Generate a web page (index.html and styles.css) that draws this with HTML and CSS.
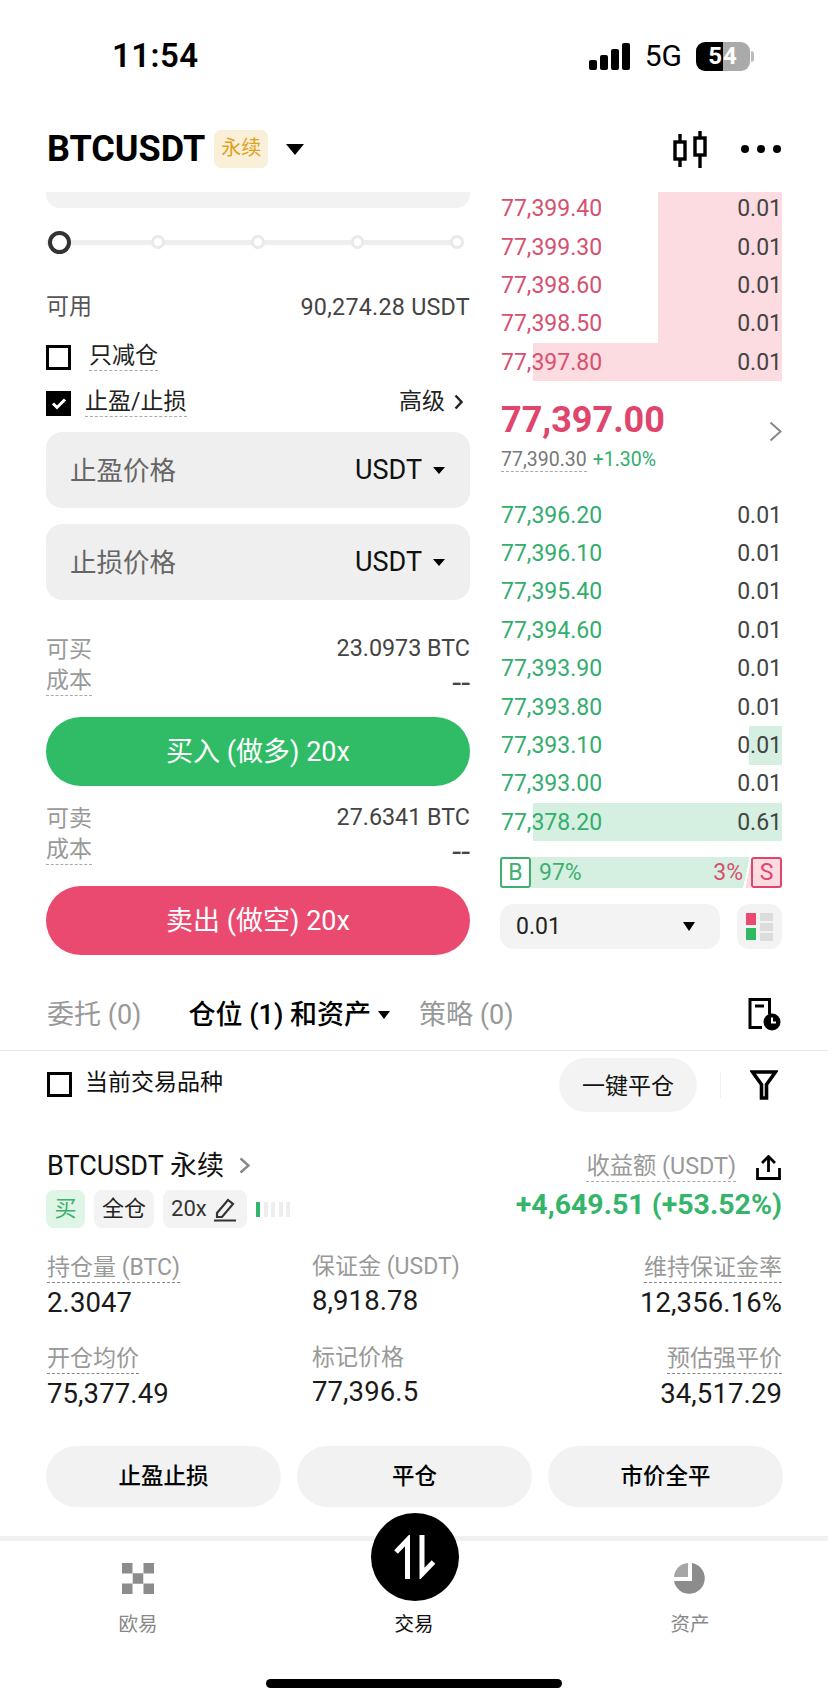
FILE: index.html
```html
<!DOCTYPE html>
<html lang="zh">
<head>
<meta charset="utf-8">
<title>BTCUSDT</title>
<link rel="stylesheet" href="styles.css">
</head>
<body>
<div class="page">
  <div class="status">
    <span class="time">11:54</span>
    <div class="status-right">
      <svg class="signal" width="42" height="27" viewBox="0 0 42 27"><rect x="0" y="17" width="8" height="10" rx="2"/><rect x="11" y="12" width="8" height="15" rx="2"/><rect x="22" y="6" width="8" height="21" rx="2"/><rect x="33" y="0" width="8" height="27" rx="2"/></svg>
      <span class="net">5G</span>
      <div class="battery"><span class="bat-a">5</span><span class="bat-b">4</span><i class="bat-tip"></i></div>
    </div>
  </div>

  <header class="head">
    <div class="head-left">
      <span class="symbol">BTCUSDT</span>
      <span class="perp">永续</span>
      <i class="tri tri-lg"></i>
    </div>
    <div class="head-right">
      <svg width="36" height="37" viewBox="0 0 36 37" fill="none" stroke="#000" stroke-width="3.4"><path d="M7 3v8M7 28v8M27 0v7M27 24v13"/><rect x="2" y="11" width="10" height="17"/><rect x="22" y="7" width="10" height="17"/></svg>
      <svg width="40" height="8" viewBox="0 0 40 8"><circle cx="4" cy="4" r="4"/><circle cx="20" cy="4" r="4"/><circle cx="36" cy="4" r="4"/></svg>
    </div>
  </header>

  <main class="trade">
    <section class="form">
      <div class="stub"></div>
      <div class="slider">
        <i class="knob"></i><i class="stop stop-first"></i><i class="stop"></i><i class="stop"></i><i class="stop"></i>
      </div>
      <div class="kv kv-avail"><span class="k-dark">可用</span><span class="avail">90,274.28 USDT</span></div>
      <label class="check-row reduce"><i class="box"></i><span class="dash check-text">只减仓</span></label>
      <div class="check-row tpsl">
        <i class="box box-on"><svg width="16" height="13" viewBox="0 0 16 13" fill="none" stroke="#fff" stroke-width="3"><path d="M2 6.5l4 4 8-8"/></svg></i>
        <span class="dash check-text">止盈/止损</span>
        <span class="adv">高级<svg width="9" height="16" viewBox="0 0 9 16" fill="none" stroke="#222" stroke-width="2.4"><path d="M1.5 1.5L7.5 8l-6 6.5"/></svg></span>
      </div>
      <div class="field"><span class="ph">止盈价格</span><span class="unit">USDT<i class="tri tri-sm"></i></span></div>
      <div class="field field-2"><span class="ph">止损价格</span><span class="unit">USDT<i class="tri tri-sm"></i></span></div>
      <div class="kv kv-first"><span class="k k-top">可买</span><span>23.0973 BTC</span></div>
      <div class="kv"><span class="k dash">成本</span><span class="none">--</span></div>
      <button class="cta buy">买入 (做多) 20x</button>
      <div class="kv kv-second"><span class="k k-top">可卖</span><span>27.6341 BTC</span></div>
      <div class="kv"><span class="k dash">成本</span><span class="none">--</span></div>
      <button class="cta sell">卖出 (做空) 20x</button>
    </section>

    <section class="book">
      <div class="asks">
        <div class="row ask"><i class="depth d-ask" style="width:124px"></i><span>77,399.40</span><b>0.01</b></div>
        <div class="row ask"><i class="depth d-ask" style="width:124px"></i><span>77,399.30</span><b>0.01</b></div>
        <div class="row ask"><i class="depth d-ask" style="width:124px"></i><span>77,398.60</span><b>0.01</b></div>
        <div class="row ask"><i class="depth d-ask" style="width:124px"></i><span>77,398.50</span><b>0.01</b></div>
        <div class="row ask"><i class="depth d-ask" style="width:249px"></i><span>77,397.80</span><b>0.01</b></div>
      </div>
      <div class="mid">
        <div>
          <div class="last">77,397.00</div>
          <div class="sub"><span class="dash mark">77,390.30</span><span class="chg">+1.30%</span></div>
        </div>
        <svg width="13" height="21" viewBox="0 0 13 21" fill="none" stroke="#888" stroke-width="2"><path d="M1.5 1.5l10 9-10 9"/></svg>
      </div>
      <div class="bids">
        <div class="row bid"><span>77,396.20</span><b>0.01</b></div>
        <div class="row bid"><span>77,396.10</span><b>0.01</b></div>
        <div class="row bid"><span>77,395.40</span><b>0.01</b></div>
        <div class="row bid"><span>77,394.60</span><b>0.01</b></div>
        <div class="row bid"><span>77,393.90</span><b>0.01</b></div>
        <div class="row bid"><span>77,393.80</span><b>0.01</b></div>
        <div class="row bid"><i class="depth d-bid" style="width:33px"></i><span>77,393.10</span><b>0.01</b></div>
        <div class="row bid"><span>77,393.00</span><b>0.01</b></div>
        <div class="row bid"><i class="depth d-bid" style="width:249px"></i><span>77,378.20</span><b>0.61</b></div>
      </div>
      <div class="ratio">
        <span class="tagb">B</span>
        <div class="ratio-bar"><span class="pb">97%</span><span class="ps">3%</span></div>
        <span class="tags">S</span>
      </div>
      <div class="controls">
        <div class="select"><span>0.01</span><i class="tri tri-md"></i></div>
        <div class="layout-btn">
          <svg width="28" height="28" viewBox="0 0 28 28"><rect width="10" height="12" fill="#ea4a70"/><rect y="15" width="10" height="12" fill="#2fb963"/><rect x="14" width="13" height="8" fill="#dcdcdc"/><rect x="14" y="10" width="13" height="8" fill="#dcdcdc"/><rect x="14" y="20" width="13" height="8" fill="#dcdcdc"/></svg>
        </div>
      </div>
    </section>
  </main>

  <nav class="tabs">
    <span class="tab">委托 (0)</span>
    <span class="tab tab-on">仓位 (1) 和资产<i class="tri tri-xs"></i></span>
    <span class="tab">策略 (0)</span>
    <svg class="tab-icon" width="33" height="33" viewBox="0 0 33 33" fill="none" stroke="#000" stroke-width="3"><path d="M14 29.5H2V1.5h19.500V16"/><path d="M7 8h9"/><circle cx="24" cy="24" r="8.500" fill="#000" stroke="none"/><path d="M24 19.500V24.500h4" stroke="#fff" stroke-width="2"/></svg>
  </nav>

  <div class="filter">
    <label class="cur"><i class="box"></i><span>当前交易品种</span></label>
    <div class="filter-right">
      <button class="close-all">一键平仓</button>
      <i class="vline"></i>
      <svg width="28" height="30" viewBox="0 0 28 30" fill="none" stroke="#000" stroke-width="3.600"><path d="M2.500 2h23l-9 12.500V28h-5V14.500z" stroke-linejoin="miter"/></svg>
    </div>
  </div>

  <section class="pos">
    <div class="pos-top">
      <div class="pos-title">BTCUSDT 永续<svg width="11" height="17" viewBox="0 0 11 17" fill="none" stroke="#888" stroke-width="2.400"><path d="M1.500 1.500l8 7-8 7"/></svg></div>
      <div class="pnl-label"><span class="dash">收益额 (USDT)</span>
        <svg width="25" height="25" viewBox="0 0 25 25" fill="none" stroke="#000" stroke-width="2.800"><path d="M12.500 17V2M6 8l6.500-6.500L19 8M1.500 13v10.500h22V13"/></svg>
      </div>
    </div>
    <div class="pos-sub">
      <div class="tags-row">
        <span class="pill pill-buy">买</span>
        <span class="pill">全仓</span>
        <span class="pill pill-lev">20x
          <svg width="22" height="25" viewBox="0 0 22 25" fill="none" stroke="#333" stroke-width="2.200"><path d="M3 16L14 3l5 4L8 20H3zM0 23.500h22"/></svg>
        </span>
        <div class="lev"><i class="on"></i><i></i><i></i><i></i><i></i></div>
      </div>
      <div class="pnl">+4,649.51 (+53.52%)</div>
    </div>
    <div class="stats">
      <div class="stat"><span class="dash lbl">持仓量 (BTC)</span><b>2.3047</b></div>
      <div class="stat stat-mid"><span class="lbl">保证金 (USDT)</span><b>8,918.78</b></div>
      <div class="stat stat-end"><span class="dash lbl">维持保证金率</span><b>12,356.16%</b></div>
      <div class="stat"><span class="dash lbl">开仓均价</span><b>75,377.49</b></div>
      <div class="stat stat-mid"><span class="lbl">标记价格</span><b>77,396.5</b></div>
      <div class="stat stat-end"><span class="dash lbl">预估强平价</span><b>34,517.29</b></div>
    </div>
    <div class="actions">
      <button class="act">止盈止损</button>
      <button class="act">平仓</button>
      <button class="act">市价全平</button>
    </div>
  </section>

  <footer class="nav">
    <div class="nav-item">
      <svg width="32" height="31" viewBox="0 0 32 31" fill="#8c8c8c"><rect width="10.500" height="10.500"/><rect x="21.500" width="10.500" height="10.500"/><rect x="10.750" y="10.250" width="10.500" height="10.500"/><rect y="20.500" width="10.500" height="10.500"/><rect x="21.500" y="20.500" width="10.500" height="10.500"/></svg>
      <span>欧易</span>
    </div>
    <div class="nav-item nav-on">
      <div class="fab"><svg width="42" height="44" viewBox="0 0 42 44" fill="none" stroke="#fff" stroke-width="5"><path d="M13.500 44V5L2 17"/><path d="M28 0v39L39.500 27"/></svg></div>
      <span>交易</span>
    </div>
    <div class="nav-item">
      <svg width="32" height="31" viewBox="0 0 32 31"><path d="M18 0a15.500 15.500 0 1 1-18 18h18z" fill="#8c8c8c"/><path d="M14 0v14H0A15 15 0 0 1 14 0z" fill="#a6a6a6"/></svg>
      <span>资产</span>
    </div>
    <div class="home-bar"></div>
  </footer>
</div>
</body>
</html>
```
FILE: styles.css
```css
* { box-sizing: border-box; }
html, body { margin: 0; padding: 0; background: #fff; }
body { font-family: Roboto, "Noto Sans CJK SC", sans-serif; color: #000; }
i { display: block; font-style: normal; }
button { border: 0; font-family: inherit; padding: 0; }
.page { width: 828px; height: 1704px; overflow: hidden; position: relative; }

.status { height: 106px; padding: 36px 78px 30px 112px; display: flex; justify-content: space-between; align-items: center; }
.time { font-size: 33px; font-weight: 600; line-height: 40px; letter-spacing: .4px; }
.status-right { display: flex; align-items: center; }
.signal { margin-right: 1px; }
.net { font-size: 30px; margin: 0 14px 0 13px; line-height: 30px; }
.battery { width: 54px; height: 29px; border-radius: 9px; display: flex; overflow: visible; position: relative; font-size: 24px; font-weight: 700; color: #fff; line-height: 29px; }
.bat-a { width: 27px; background: #000; border-radius: 9px 0 0 9px; text-align: right; padding-right: 1px; }
.bat-b { width: 27px; background: #aaa; border-radius: 0 9px 9px 0; text-align: left; padding-left: 0; }
.bat-tip { position: absolute; right: -4px; top: 9px; width: 3px; height: 11px; background: #bbb; border-radius: 0 3px 3px 0; }

.head { height: 86px; padding: 0 47px 0 47px; display: flex; justify-content: space-between; align-items: center; }
.head-left { display: flex; align-items: center; }
.symbol { font-size: 36px; font-weight: 700; line-height: 40px; }
.perp { width: 54px; height: 38px; margin-left: 9px; background: #faefd8; color: #e0a21e; border-radius: 7px; font-size: 20px; line-height: 36px; text-align: center; }
.head-right { display: flex; align-items: center; gap: 32px; }

.tri { width: 0; height: 0; border-style: solid; border-color: #000 transparent transparent; }
.tri-lg { border-width: 11px 9px 0; margin-left: 18px; }
.tri-md { border-width: 9px 6px 0; }
.tri-sm { border-width: 7px 6px 0; margin-left: 11px; }
.tri-xs { border-width: 8px 6px 0; margin-left: 7px; }

.trade { display: flex; padding: 0 46px 0 46px; gap: 30px; height: 763px; }
.form { width: 424px; flex: none; }
.book { width: 282px; flex: none; overflow: hidden; }

.stub { height: 16px; background: #f2f2f2; border-radius: 0 0 14px 14px; }
.slider { height: 24px; margin-top: 22px; padding: 0 6px 0 2px; display: flex; align-items: center; gap: 85.700px; background: linear-gradient(#eeeeee, #eeeeee) left center / 408px 5px no-repeat; }
.knob { width: 23px; height: 23px; border-radius: 50%; border: 4px solid #333; background: #fff; }
.stop { width: 14px; height: 14px; border-radius: 50%; border: 3px solid #e9e9e9; background: #fff; }
.stop-first { margin-left: -5px; }

.kv { display: flex; justify-content: space-between; font-size: 23.300px; line-height: 34px; height: 34px; color: #444; }
.k { color: #999; font-size: 23px; height: 31px; line-height: 31px; }
.k-top { height: 34px; line-height: 38px; }
.k-dark { color: #555; font-size: 23px; }
.avail { letter-spacing: .25px; }
.kv-avail { margin-top: 36px; }
.kv-first { margin-top: 31px; }
.kv-second { margin-top: 14px; }
.none { font-size: 32px; }

.dash { border-bottom: 1px dashed #aaa; }
.box { width: 25px; height: 25px; border: 3px solid #000; flex: none; display: flex; align-items: center; justify-content: center; }
.box-on { background: #000; }

.check-row { display: flex; align-items: center; font-size: 23px; color: #222; height: 26px; }
.reduce { margin-top: 20px; }
.reduce .check-text { margin-left: 18px; }
.tpsl { margin-top: 20px; }
.tpsl .check-text { margin-left: 14px; }
.check-text { line-height: 23px; height: 27px; }
.adv { margin-left: auto; margin-right: 7px; display: flex; align-items: center; gap: 9px; line-height: 24px; margin-bottom: 3px; }

.field { height: 76px; margin-top: 16px; background: #efefef; border-radius: 16px; padding: 0 25px 0 24px; display: flex; justify-content: space-between; align-items: center; }
.ph { font-size: 26.500px; color: #666; margin-bottom: 4px; }
.unit { font-size: 27px; color: #111; display: flex; align-items: center; }

.cta { display: block; width: 100%; height: 69px; border-radius: 35px; color: #fff; font-size: 27px; margin-top: 18px; text-align: center; padding-bottom: 4px; }
.buy { background: #30bc66; }
.sell { background: #eb4a70; }

.asks { margin-top: -2.500px; }
.row { position: relative; height: 38.400px; display: flex; justify-content: space-between; align-items: center; font-size: 23px; padding: 0 0 0 1px; }
.row span, .row b { position: relative; font-weight: 400; }
.row b { color: #444; }
.ask span { color: #d6506f; }
.bid span { color: #34ad6e; }
.depth { position: absolute; right: 0; top: 0; bottom: 0; }
.d-ask { background: #fcdbe1; }
.d-bid { background: #d5f0e0; }

.mid { height: 114.500px; padding: 17px 0 0 1px; display: flex; justify-content: space-between; align-items: flex-start; }
.mid svg { margin-top: 23px; }
.last { font-size: 36px; font-weight: 700; color: #e0456e; line-height: 44px; }
.sub { font-size: 19.500px; line-height: 22px; display: flex; margin-top: 7px; }
.mark { color: #777; }
.chg { color: #34ad6e; margin-left: 6px; }

.ratio { display: flex; height: 31px; margin-top: 16px; font-size: 23px; line-height: 27px; }
.tagb, .tags { width: 31px; flex: none; border: 2px solid; border-radius: 3px; text-align: center; }
.tagb { color: #3db070; border-color: #3db070; }
.tags { color: #e0456e; border-color: #e0456e; background: #fcdbe1; }
.ratio-bar { flex: 1; display: flex; justify-content: space-between; padding: 2px 8px 0 8px; background: linear-gradient(102deg, #d5f0e0 96.500%, #fff 96.500%, #fff 97.500%, #fcdbe1 97.500%); }
.pb { color: #3db070; }
.ps { color: #d6506f; }

.controls { display: flex; justify-content: space-between; margin-top: 16px; }
.select { width: 220px; height: 45px; background: #f3f3f3; border-radius: 14px; padding: 0 25px 0 16px; display: flex; justify-content: space-between; align-items: center; font-size: 23px; color: #222; }
.layout-btn { width: 45px; height: 45px; background: #f3f3f3; border-radius: 12px; display: flex; align-items: center; justify-content: center; }

.tabs { height: 96px; padding: 45px 47px 0 47px; border-bottom: 1px solid #e6e6e6; display: flex; align-items: flex-start; }
.tab { font-size: 27px; line-height: 30px; color: #999; display: flex; align-items: center; margin-right: 47px; }
.tab-on { color: #000; margin-right: 29px; font-weight: 500; }
.tab-icon { margin-left: auto; margin-top: -2px; }

.filter { height: 61px; padding: 7px 50px 0 47px; display: flex; justify-content: space-between; align-items: center; }
.cur { display: flex; align-items: center; gap: 13px; font-size: 23px; color: #111; line-height: 26px; margin-top: -2px; }
.cur span { margin-bottom: 2px; }
.filter-right { display: flex; align-items: center; }
.close-all { width: 138px; height: 54px; border-radius: 27px; background: #f3f3f3; font-size: 23px; color: #111; padding-bottom: 3px; }
.vline { width: 1px; height: 26px; background: #f0f0f0; margin: 0 29px 0 23px; }

.pos { padding: 38px 46px 0 47px; }
.pos-top { display: flex; justify-content: space-between; align-items: center; height: 34px; }
.pos-title { font-size: 27px; color: #111; display: flex; align-items: center; gap: 15px; line-height: 30px; margin-top: -3px; }
.pnl-label { display: flex; align-items: center; font-size: 23.300px; color: #999; gap: 20px; padding-right: 1px; line-height: 29px; }
.pos-sub { display: flex; justify-content: space-between; align-items: flex-start; margin-top: 6px; height: 39px; }
.tags-row { display: flex; align-items: center; margin-left: -1px; }
.pill { height: 38px; padding: 0 8px; border-radius: 8px; background: #f3f3f3; font-size: 22px; line-height: 38px; color: #222; margin-right: 9px; display: flex; align-items: center; }
.pill-buy { background: #dff5e6; color: #3db070; width: 39px; padding: 0; justify-content: center; }
.pill-lev { width: 84px; gap: 7px; color: #333; }
.lev { display: flex; gap: 3.500px; }
.lev i { width: 4px; height: 15px; background: #eee; }
.lev .on { background: #35b56b; }
.pnl { font-size: 28.500px; font-weight: 700; color: #35b56b; line-height: 30px; }

.stats { display: grid; grid-template-columns: 265px 1fr auto; row-gap: 23px; margin-top: 24px; }
.stat { display: flex; flex-direction: column; align-items: flex-start; }
.stat-mid { margin-top: -1px; }
.stat-end { align-items: flex-end; }
.lbl { font-size: 23px; line-height: 29px; color: #999; }
.lbl.dash { border-bottom-color: #888; }
.stat b { font-size: 27.500px; font-weight: 400; line-height: 36px; color: #1a1a1a; margin-top: 2px; letter-spacing: .1px; }

.actions { display: grid; grid-template-columns: repeat(3, 235px); column-gap: 16px; margin: 34px 0 0 -1px; }
.act { height: 61px; border-radius: 31px; background: #f2f2f2; font-size: 22.500px; font-weight: 500; color: #000; padding-bottom: 6px; }

.nav { position: absolute; left: 0; right: 0; top: 1536px; height: 168px; border-top: 5px solid #f1f1f1; display: grid; grid-template-columns: repeat(3, 1fr); padding: 22px 0 0; justify-items: center; }
.nav-item { display: flex; flex-direction: column; align-items: center; width: 120px; font-size: 19.500px; color: #888; }
.nav-item span { margin-top: 17px; line-height: 28px; }
.nav-item svg { display: block; }
.nav-on { padding-top: 31px; color: #111; }
.fab { position: absolute; left: 371px; top: -28px; width: 88px; height: 88px; border-radius: 50%; background: #000; display: flex; align-items: center; justify-content: center; }
.home-bar { position: absolute; left: 266px; top: 138px; width: 296px; height: 9px; border-radius: 5px; background: #000; }
```
